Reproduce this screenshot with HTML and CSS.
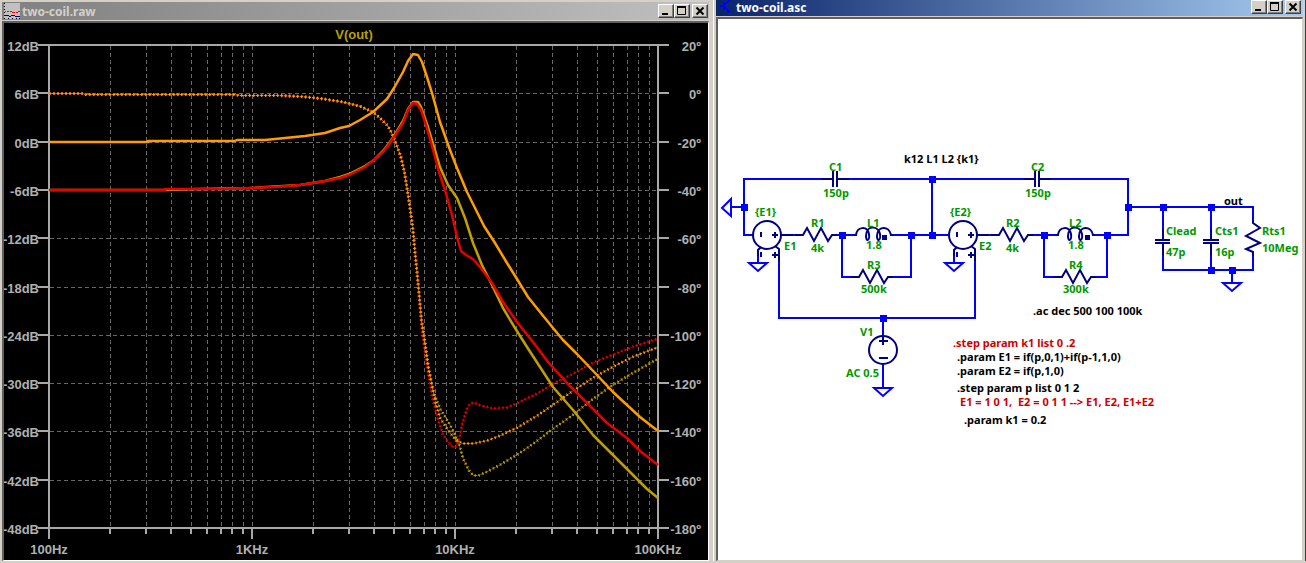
FILE: index.html
```html
<!DOCTYPE html>
<html lang="en">
<head>
<meta charset="utf-8">
<title>two-coil</title>
<link rel="stylesheet" href="styles.css">
</head>
<body>
<main class="desktop">
  <section class="window window-plot" aria-label="two-coil.raw">
    <header class="titlebar titlebar-inactive">
      <svg class="title-icon" viewBox="0 0 16 16" width="16" height="16" aria-hidden="true" shape-rendering="crispEdges">
        <rect width="16" height="16" fill="#c0c0c0"/>
        <path d="M0 0h1v1h-1zM0 3h1v1h-1zM0 6h1v1h-1zM0 9h1v1h-1zM0 12h1v1h-1zM0 15h1v1h-1zM4 15h1v1h-1zM8 15h1v1h-1zM12 15h1v1h-1zM15 15h1v1h-1z" fill="#000"/>
        <path d="M1 8.500h1M3 8.500h2M6 8.500h2M8 9.500h3M12 9.500h2M14 8.500h2" stroke="#f00"/>
        <path d="M0 12.500h5M5 13.500h2M7 12.500h4M11 13.500h5" stroke="#000080"/>
      </svg>
      <h1 class="title">two-coil.raw</h1>
      <div class="controls">
        <button class="ctl" aria-label="Minimize"><svg viewBox="0 0 12 10" width="12" height="10"><path d="M2 8h6" stroke="#000" stroke-width="2"/></svg></button>
        <button class="ctl" aria-label="Maximize"><svg viewBox="0 0 12 10" width="12" height="10"><path d="M1.500 1v7.500h8V1" fill="none" stroke="#000"/><path d="M1 1h9" stroke="#000" stroke-width="2"/></svg></button>
        <button class="ctl ctl-close" aria-label="Close"><svg viewBox="0 0 12 10" width="12" height="10"><path d="M2.500 1.500l7 7M9.500 1.500l-7 7" stroke="#000" stroke-width="2"/></svg></button>
      </div>
    </header>
    <div class="viewport viewport-plot">
      <svg class="canvas" viewBox="4 23 704 537" role="img" aria-label="Frequency response of V(out)">
        <defs>
          <path id="ph-olive" d="M49 93L82 93L85 94L235 94L238 95L278 95L300 96L320 98L340 101L349 103L360 106L373 112L380 118L387 125L391 132L394 139L400 155L404 172L408 197L412 225L415 257L418 287L421 320L424 338L428 367L433 392L440 409L447 420L453 431L458 442L463 459L469 471L473 475L478 475L487 471L500 464L517 454L533 443L553 428L573 414L593 398L613 384L633 372L658 358"/>
          <path id="ph-red" d="M49 93L82 93L85 94L235 94L238 95L278 95L300 96L320 98L340 101L349 103L360 106L373 112L380 118L387 125L391 132L394 139L400 155L404 172L408 197L412 225L415 257L418 287L421 325L423 342L427 370L432 398L437 417L442 433L447 441L452 446L455 447L459 437L462 422L467 407L470 403L473 402L480 405L492 408L507 407L520 401L537 393L553 383L573 373L593 362L613 354L633 346L658 338"/>
          <path id="ph-orange" d="M49 93L82 93L85 94L235 94L238 95L278 95L300 96L320 98L340 101L349 103L360 106L373 112L380 118L387 125L391 132L394 139L400 155L404 172L408 197L412 225L415 257L418 287L421 320L424 340L428 368L435 402L440 418L447 429L455 439L462 443L473 443L487 440L500 435L517 427L537 415L553 404L573 390L593 377L613 366L633 356L657 347"/>
        </defs>
        <g class="grid">
          <path d="M110.500 46V527M146.500 46V527M171.500 46V527M191.500 46V527M207.500 46V527M221.500 46V527M232.500 46V527M243.500 46V527M252.500 46V527M313.500 46V527M349.500 46V527M374.500 46V527M394.500 46V527M410.500 46V527M424.500 46V527M435.500 46V527M446.500 46V527M455.500 46V527M516.500 46V527M552.500 46V527M577.500 46V527M597.500 46V527M613.500 46V527M627.500 46V527M638.500 46V527M649.500 46V527"/>
          <path d="M50 93.500H657M50 142.500H657M50 190.500H657M50 238.500H657M50 287.500H657M50 335.500H657M50 383.500H657M50 431.500H657M50 480.500H657"/>
        </g>
        <g class="axis">
          <path d="M49 44V539M658 44V539M38 45H669M38 528H669"/>
          <path d="M38 93H49M38 142H49M38 190H49M38 238H49M38 287H49M38 335H49M38 383H49M38 431H49M38 480H49"/>
          <path d="M658 93H669M658 142H669M658 190H669M658 238H669M658 287H669M658 335H669M658 383H669M658 431H669M658 480H669"/>
          <path d="M110 528V534M146 528V534M171 528V534M191 528V534M207 528V534M221 528V534M232 528V534M243 528V534M252 528V539M313 528V534M349 528V534M374 528V534M394 528V534M410 528V534M424 528V534M435 528V534M446 528V534M455 528V539M516 528V534M552 528V534M577 528V534M597 528V534M613 528V534M627 528V534M638 528V534M649 528V534"/>
        </g>
        <g class="phase" transform="translate(0.5 0.5)">
          <g class="olive"><use href="#ph-olive" class="dot-v"/><use href="#ph-olive" class="dot-h"/></g>
          <g class="red"><use href="#ph-red" class="dot-v"/><use href="#ph-red" class="dot-h"/></g>
          <g class="orange"><use href="#ph-orange" class="dot-v"/><use href="#ph-orange" class="dot-h"/></g>
        </g>
        <path class="trace olive" d="M49 190L165 190L200 189L250 188L300 185L325 181L340 177L349 174L365 166L374 160L383 151L390 142L394 136L403 121L408 109L413 102L418 102L421 107L428 127L435 150L440 167L448 185L457 198L465 218L473 243L482 265L492 285L503 308L515 328L527 347L540 367L553 387L573 410L593 435L613 455L633 475L647 489L658 498"/>
        <path class="trace red" d="M49 190L165 190L165 189L220 189L250 188L275 187L300 185L325 181L340 178L349 175L365 167L374 160L383 152L390 143L394 137L403 123L408 110L413 103L417 104L421 110L426 125L430 139L435 157L439 172L445 190L452 215L457 237L461 251L466 255L473 259L480 267L492 283L503 302L517 322L533 342L548 362L567 383L587 403L607 423L627 438L640 451L658 465"/>
        <path class="trace orange" d="M49 142L148 142L148 141L235 141L237 140L265 140L285 138L305 136L325 133L340 128L349 126L360 120L373 112L387 99L394 88L403 72L408 61L413 54L418 55L422 62L427 77L432 93L440 122L450 150L457 168L467 192L477 212L484 226L495 243L507 263L517 279L528 297L540 312L553 328L563 340L577 354L597 375L613 392L627 405L640 417L658 431"/>
        <g class="axis-text">
          <text class="caption" x="354" y="39" text-anchor="middle">V(out)</text>
          <g text-anchor="end">
            <text x="39" y="51">12dB</text><text x="39" y="99">6dB</text><text x="39" y="148">0dB</text><text x="39" y="196">-6dB</text><text x="39" y="244">-12dB</text><text x="39" y="293">-18dB</text><text x="39" y="341">-24dB</text><text x="39" y="389">-30dB</text><text x="39" y="437">-36dB</text><text x="39" y="486">-42dB</text><text x="39" y="534">-48dB</text>
            <text x="701" y="51">20º</text><text x="701" y="99">0º</text><text x="701" y="148">-20º</text><text x="701" y="196">-40º</text><text x="701" y="244">-60º</text><text x="701" y="293">-80º</text><text x="701" y="341">-100º</text><text x="701" y="389">-120º</text><text x="701" y="437">-140º</text><text x="701" y="486">-160º</text><text x="701" y="534">-180º</text>
          </g>
          <g text-anchor="middle">
            <text x="49" y="554">100Hz</text><text x="252" y="554">1KHz</text><text x="455" y="554">10KHz</text><text x="658" y="554">100KHz</text>
          </g>
        </g>
      </svg>
    </div>
  </section>

  <section class="window window-schematic" aria-label="two-coil.asc">
    <header class="titlebar titlebar-active">
      <svg class="title-icon" viewBox="0 0 16 16" width="16" height="16" aria-hidden="true" shape-rendering="crispEdges">
        <path d="M2 7h4M6 3v8M6 6l5-4V0M6 8l5 4v2M9 13h3" fill="none" stroke="#00f" stroke-width="1.500"/>
      </svg>
      <h1 class="title">two-coil.asc</h1>
      <div class="controls">
        <button class="ctl" aria-label="Minimize"><svg viewBox="0 0 12 10" width="12" height="10"><path d="M2 8h6" stroke="#000" stroke-width="2"/></svg></button>
        <button class="ctl" aria-label="Maximize"><svg viewBox="0 0 12 10" width="12" height="10"><path d="M1.500 1v7.500h8V1" fill="none" stroke="#000"/><path d="M1 1h9" stroke="#000" stroke-width="2"/></svg></button>
        <button class="ctl ctl-close" aria-label="Close"><svg viewBox="0 0 12 10" width="12" height="10"><path d="M2.500 1.500l7 7M9.500 1.500l-7 7" stroke="#000" stroke-width="2"/></svg></button>
      </div>
    </header>
    <div class="viewport viewport-schematic">
      <svg class="canvas" viewBox="718 19 584 541" role="img" aria-label="Two-coil pickup circuit">
        <defs>
          <path id="ground" d="M-9 0H9L0 8Z"/>
          <path id="resistor" d="M-8 0H0L4 -7L11 6L18 -7L25 6L29 0H34"/>
          <path id="coil" d="M-2 0H0C1 -8 11 -10 13 -1C14 6 10 7 10 1C10 -10 22 -10 24 -1C25 6 21 7 21 1C21 -9 33 -10 35 0H37"/>
          <path id="cap" d="M-12 0H-1M3 0H15M-1 -8V8M3 -8V8"/>
          <g id="vcvs">
            <circle r="14"/>
            <path d="M-6 -3V2M8 -3V3M5 0H11M-6 17V22M8 17V23M5 20H11M-6 12L-9 15V21M8 11L12 14V26M14 0H26"/>
          </g>
        </defs>
        <g class="wire">
          <path d="M753 235H744V179H822M731 207H744M847 179H1024M1049 179H1128V235H1093M932 179V235M792 235H801M834 235H856M890 235H949M842 235V277H857M890 277H911V235M988 235H997M1030 235H1058M1044 235V277H1060M1092 277H1107V235"/>
          <path d="M758 256V263M954 256V263M779 258V318H975V258M883 318V335M883 364V388M1128 207H1253V222M1163 207V229M1163 255V270H1253V253M1211 207V229M1211 255V270M1232 270V283"/>
          <use href="#ground" x="758" y="263"/><use href="#ground" x="954" y="263"/><use href="#ground" x="883" y="388"/><use href="#ground" x="1232" y="283"/>
          <path d="M731 199V216L722 208Z"/>
        </g>
        <g class="part">
          <use href="#vcvs" x="767" y="235"/><use href="#vcvs" x="963" y="235"/>
          <use href="#cap" x="834" y="179"/><use href="#cap" x="1036" y="179"/>
          <use href="#resistor" x="803" y="235"/><use href="#resistor" x="999" y="235"/>
          <use href="#resistor" x="859" y="277"/><use href="#resistor" x="1062" y="277"/>
          <use href="#coil" x="856" y="235"/><use href="#coil" x="1058" y="235"/>
          <circle cx="883" cy="350" r="14"/>
          <path d="M883 335V345M879 341H888M879 358H888"/>
          <path d="M1155 240H1170M1155 243H1170M1163 229V240M1163 243V255M1203 240H1219M1203 243H1219M1211 229V240M1211 243V255M1253 220V223L1260 228L1246 236L1260 243L1246 249L1253 252V256"/>
        </g>
        <path class="polarity" d="M882 235h5v5h-5zM1085 235h5v5h-5z"/>
        <path class="node" d="M741 204h7v7h-7zM929 176h7v7h-7zM929 232h7v7h-7zM839 232h7v7h-7zM908 232h7v7h-7zM1041 232h7v7h-7zM1104 232h7v7h-7zM1125 204h7v7h-7zM1160 204h7v7h-7zM1208 204h7v7h-7zM1208 267h7v7h-7zM1229 267h7v7h-7zM880 315h7v7h-7z"/>
        <g class="label">
          <text x="829" y="171">C1</text><text x="823" y="197">150p</text><text x="755" y="216">{E1}</text><text x="784" y="250">E1</text>
          <text x="811" y="227">R1</text><text x="811" y="252">4k</text><text x="867" y="227">L1</text><text x="866" y="249">1.8</text>
          <text x="867" y="269">R3</text><text x="861" y="293">500k</text>
          <text x="1031" y="171">C2</text><text x="1025" y="197">150p</text><text x="950" y="216">{E2}</text><text x="979" y="250">E2</text>
          <text x="1006" y="227">R2</text><text x="1006" y="252">4k</text><text x="1069" y="227">L2</text><text x="1068" y="249">1.8</text>
          <text x="1069" y="269">R4</text><text x="1063" y="293">300k</text>
          <text x="1166" y="235">Clead</text><text x="1166" y="256">47p</text><text x="1215" y="235">Cts1</text><text x="1215" y="256">16p</text>
          <text x="1262" y="235">Rts1</text><text x="1262" y="252">10Meg</text>
          <text x="860" y="336">V1</text><text x="846" y="377">AC 0.5</text>
        </g>
        <g class="directive">
          <text x="904" y="163">k12 L1 L2 {k1}</text>
          <text x="1224" y="205">out</text>
          <text x="1033" y="315">.ac dec 500 100 100k</text>
          <text x="957" y="361">.param E1 = if(p,0,1)+if(p-1,1,0)</text>
          <text x="957" y="375">.param E2 = if(p,1,0)</text>
          <text x="957" y="392">.step param p list 0 1 2</text>
          <text x="964" y="424">.param k1 = 0.2</text>
        </g>
        <g class="remark">
          <text x="953" y="347">.step param k1 list 0 .2</text>
          <text x="960" y="406">E1 = 1 0 1,&#160; E2 = 0 1 1 --&gt; E1, E2, E1+E2</text>
        </g>
      </svg>
    </div>
  </section>
</main>
</body>
</html>
```
FILE: styles.css
```css
* { box-sizing: border-box; }
body { margin: 0; background: #d4d0c8; }
.desktop {
  display: grid;
  grid-template-columns: 714fr 592fr;
  min-height: 100vh;
  align-items: start;
}
.window { min-width: 0; background: #d4d0c8; }
.window-plot { padding: 2px 4px 0 2px; border-right: 1px solid #fff; }
.window-schematic { padding: 0 2px; border-right: 1px solid #404040; }

.titlebar { display: flex; align-items: center; gap: 2px; padding: 0 1px 0 2px; }
.titlebar-inactive { height: 18px; background: linear-gradient(90deg, #808080, #c0c0c0); color: #d4d0c8; }
.titlebar-active { height: 16px; padding-right: 2px; padding-bottom: 2px; background: linear-gradient(90deg, #0a246a, #a6caf0); color: #fff; }
.title-icon { flex: none; }
.title {
  flex: 1;
  margin: 0;
  font: bold 12px/14px "Noto Sans", "Open Sans", sans-serif;
  padding-top: 2px;
  white-space: nowrap;
}
.controls { display: flex; }
.ctl {
  width: 16px;
  height: 14px;
  padding: 0;
  border: 1px solid;
  border-color: #fff #404040 #404040 #fff;
  box-shadow: inset -1px -1px #808080;
  background: #d4d0c8;
  line-height: 0;
}
.ctl svg { display: block; margin: 1px; }
.ctl-close { margin-left: 2px; }

.viewport { margin-top: 1px; border-style: solid; border-width: 2px 1px 1px 2px; }
.viewport-plot { border-color: #606060 #fff #fff #606060; background: #000; }
.viewport-schematic { border-color: #606060 #d4d0c8 #d4d0c8 #606060; background: #fff; }
.canvas { display: block; width: 100%; height: auto; }

.grid { fill: none; stroke: #686868; stroke-width: 1; stroke-dasharray: 4 3; }
.axis { fill: none; stroke: #a8a8a8; stroke-width: 2; }
.axis-text { fill: #b0b0b0; font: bold 13px "Liberation Sans", Arial, sans-serif; }
.caption { fill: #b8a000; }
.trace { fill: none; stroke-width: 2.5; stroke-linejoin: round; }
.phase { fill: none; }
.dot-v { stroke-width: 3; stroke-dasharray: 1 3; }
.dot-h { stroke-width: 1; stroke-dasharray: 3 1; stroke-dashoffset: 1; }
.olive { stroke: #c0a000; }
.red { stroke: #e80000; }
.orange { stroke: #ff9c00; }

.wire { fill: none; stroke: #00f; stroke-width: 2; }
.part { fill: none; stroke: #000080; stroke-width: 2; }
.node { fill: #00f; }
.polarity { fill: #000080; }
.label, .directive, .remark { font: bold 11px "Noto Sans", "Open Sans", sans-serif; }
.label { fill: #009800; }
.directive { fill: #000; }
.remark { fill: #d00000; }
```
